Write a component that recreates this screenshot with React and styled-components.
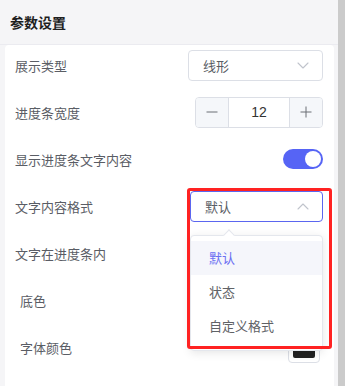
import styled, { createGlobalStyle } from 'styled-components';

const GlobalStyle = createGlobalStyle`
	* { box-sizing: border-box; }
	html, body {
		margin: 0;
		padding: 0;
		background: #f5f5f7;
		font-family: "Noto Sans CJK SC", "Liberation Sans", sans-serif;
	}
`;

const ChevronIcon = ({ up }) => (
	<svg width="12" height="7" viewBox="0 0 12 7" fill="none">
		<path
			d={up ? 'M1 6L6 1L11 6' : 'M1 1L6 6L11 1'}
			stroke="#c0c4cc"
			strokeWidth="1.1"
			strokeLinecap="round"
			strokeLinejoin="round"
		/>
	</svg>
);

const StepIcon = ({ plus }) => (
	<svg width="12" height="12" viewBox="0 0 12 12" fill="none">
		<path d="M0.5 6H11.5" stroke="#6b6e75" strokeWidth="1" />
		{plus && <path d="M6 0.5V11.5" stroke="#6b6e75" strokeWidth="1" />}
	</svg>
);

const options = ['默认', '状态', '自定义格式'];

const App = () => {
	return (
		<>
			<GlobalStyle />
			<Page>
				<Main>
					<Header>参数设置</Header>
					<Card>
						<Row>
							<Label>展示类型</Label>
							<Select $width={135}>
								<span>线形</span>
								<ChevronIcon />
							</Select>
						</Row>
						<Row>
							<Label>进度条宽度</Label>
							<Stepper>
								<StepBtn><StepIcon /></StepBtn>
								<StepValue>12</StepValue>
								<StepBtn><StepIcon plus /></StepBtn>
							</Stepper>
						</Row>
						<Row>
							<Label>显示进度条文字内容</Label>
							<Switch $on />
						</Row>
						<Row>
							<Label>文字内容格式</Label>
							<SelectWrap>
								<Select $width={133} $active>
									<span>默认</span>
									<ChevronIcon up />
								</Select>
								<Dropdown>
									<Caret />
									{options.map((o, i) => (
										<Option key={o} $selected={i === 0}>{o}</Option>
									))}
								</Dropdown>
								<Highlight />
							</SelectWrap>
						</Row>
						<Row>
							<Label>文字在进度条内</Label>
						</Row>
						<SubGroup>
							<Row>
								<Label>底色</Label>
								<Swatch $color="#ffffff" />
							</Row>
							<Row>
								<Label>字体颜色</Label>
								<Swatch $color="#222222" />
							</Row>
						</SubGroup>
					</Card>
				</Main>
				<Scrollbar />
			</Page>
		</>
	);
};

export default App;

const Page = styled.div`
	display: flex;
	width: 345px;
	height: 386px;
	overflow: hidden;
`;

const Main = styled.div`
	flex: 1;
	display: flex;
	flex-direction: column;
	background: #f5f5f7;
`;

const Header = styled.div`
	height: 45px;
	flex-shrink: 0;
	display: flex;
	align-items: center;
	padding: 0 0 1px 10px;
	border-bottom: 1px solid #ebebf0;
	font-size: 14px;
	font-weight: 700;
	color: #1f1f1f;
`;

const Card = styled.div`
	flex: 1;
	margin: 0 4px 0 5px;
	background: #ffffff;
	border-radius: 4px 4px 0 0;
	padding: 0 11px 0 10px;
	display: flex;
	flex-direction: column;
	gap: 7px;
`;

const Row = styled.div`
	height: 40px;
	display: flex;
	align-items: center;
	justify-content: space-between;
`;

const Label = styled.div`
	font-size: 13px;
	color: #5a5d65;
`;

const SelectWrap = styled.div`
	position: relative;
`;

const Select = styled.div`
	width: ${({ $width }) => $width}px;
	height: 31px;
	border: 1px solid ${({ $active }) => ($active ? '#5b66f0' : '#dcdfe6')};
	border-radius: 4px;
	display: flex;
	align-items: center;
	justify-content: space-between;
	padding: 0 13px 0 14px;
	font-size: 13px;
	color: #5a5d65;
	background: #fff;
`;

const Stepper = styled.div`
	width: 128px;
	height: 31px;
	border: 1px solid #dcdfe6;
	border-radius: 4px;
	display: flex;
	overflow: hidden;
`;

const StepBtn = styled.div`
	width: 33px;
	display: flex;
	align-items: center;
	justify-content: center;
	background: #f5f7fa;
	&:first-child { border-right: 1px solid #dcdfe6; }
	&:last-child { border-left: 1px solid #dcdfe6; }
`;

const StepValue = styled.div`
	flex: 1;
	display: flex;
	align-items: center;
	justify-content: center;
	font-size: 14px;
	color: #333;
	font-family: "Liberation Sans", sans-serif;
`;

const Switch = styled.div`
	position: relative;
	width: 40px;
	height: 20px;
	border-radius: 10px;
	background: ${({ $on }) => ($on ? '#5664f5' : '#dcdfe6')};
	&::after {
		content: '';
		position: absolute;
		top: 2px;
		left: ${({ $on }) => ($on ? '22px' : '2px')};
		width: 16px;
		height: 16px;
		border-radius: 50%;
		background: #fff;
	}
`;

const Dropdown = styled.div`
	position: absolute;
	top: 44px;
	left: 0;
	width: 133px;
	padding: 5px 0 7px;
	background: #fff;
	border: 1px solid #e4e7ed;
	border-radius: 4px;
	box-shadow: 0 2px 10px rgba(0, 0, 0, 0.1);
	z-index: 5;
`;

const Caret = styled.div`
	position: absolute;
	top: -5px;
	left: 34px;
	width: 8px;
	height: 8px;
	background: #fff;
	border-top: 1px solid #e4e7ed;
	border-left: 1px solid #e4e7ed;
	transform: rotate(45deg);
`;

const Option = styled.div`
	height: 34px;
	display: flex;
	align-items: center;
	padding-left: 18px;
	font-size: 13px;
	color: ${({ $selected }) => ($selected ? '#6a6ff2' : '#606266')};
	background: ${({ $selected }) => ($selected ? '#f5f6fb' : '#fff')};
`;

const Highlight = styled.div`
	position: absolute;
	top: -3px;
	left: -3px;
	width: 145px;
	height: 161px;
	border: 3px solid #ff2222;
	border-radius: 3px;
	z-index: 6;
	pointer-events: none;
`;

const SubGroup = styled.div`
	margin-left: -5px;
	padding-left: 10px;
	background: #fff;
	display: flex;
	flex-direction: column;
	gap: 7px;
`;

const Swatch = styled.div`
	width: 32px;
	height: 32px;
	margin-right: 3px;
	border: 1px solid #dcdfe6;
	border-radius: 4px;
	padding: 4px;
	&::after {
		content: '';
		display: block;
		width: 100%;
		height: 100%;
		border-radius: 2px;
		background: ${({ $color }) => $color};
	}
`;

const Scrollbar = styled.div`
	width: 7px;
	background: #cbcbcb;
`;
